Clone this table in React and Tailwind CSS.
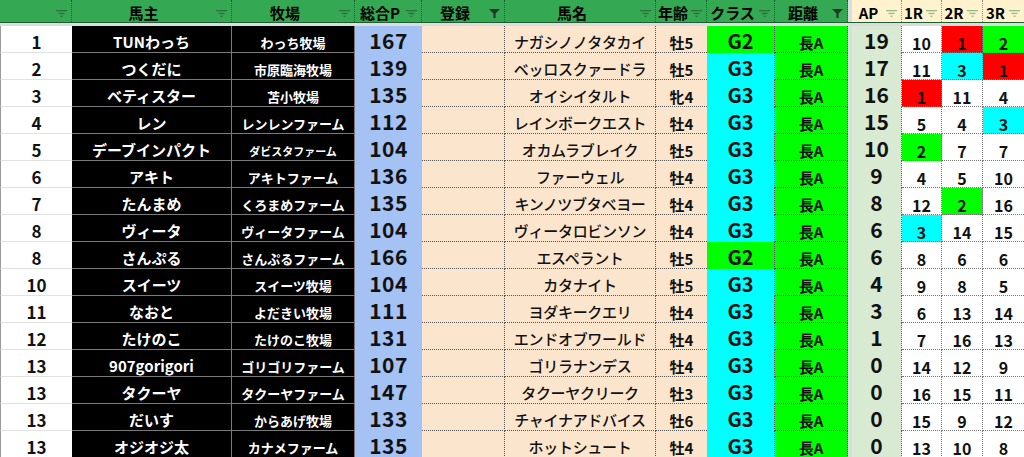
import React from "react";

const FONT = { fontFamily: '"Noto Sans CJK JP", "Noto Sans", sans-serif' };

const rows = [
  [1, "TUNわっち", "わっち牧場", 167, "ナガシノノタタカイ", "牡5", "G2", 19, 10, 1, 2],
  [2, "つくだに", "市原臨海牧場", 139, "ベッロスクァードラ", "牡5", "G3", 17, 11, 3, 1],
  [3, "ベティスター", "苫小牧場", 135, "オイシイタルト", "牝4", "G3", 16, 1, 11, 4],
  [4, "レン", "レンレンファーム", 112, "レインボークエスト", "牡4", "G3", 15, 5, 4, 3],
  [5, "デーブインパクト", "ダビスタファーム", 104, "オカムラブレイク", "牡5", "G3", 10, 2, 7, 7],
  [6, "アキト", "アキトファーム", 136, "ファーウェル", "牡4", "G3", 9, 4, 5, 10],
  [7, "たんまめ", "くろまめファーム", 135, "キンノツブタベヨー", "牡4", "G3", 8, 12, 2, 16],
  [8, "ヴィータ", "ヴィータファーム", 104, "ヴィータロビンソン", "牡4", "G3", 6, 3, 14, 15],
  [8, "さんぷる", "さんぷるファーム", 166, "エスペラント", "牡5", "G2", 6, 8, 6, 6],
  [10, "スイーツ", "スイーツ牧場", 104, "カタナイト", "牡5", "G3", 4, 9, 8, 5],
  [11, "なおと", "よだきい牧場", 111, "ヨダキークエリ", "牡4", "G3", 3, 6, 13, 14],
  [12, "たけのこ", "たけのこ牧場", 131, "エンドオブワールド", "牡4", "G3", 1, 7, 16, 13],
  [13, "907gorigori", "ゴリゴリファーム", 107, "ゴリラナンデス", "牡4", "G3", 0, 14, 12, 9],
  [13, "タクーヤ", "タクーヤファーム", 147, "タクーヤクリーク", "牡3", "G3", 0, 16, 15, 11],
  [13, "だいす", "からあげ牧場", 133, "チャイナアドバイス", "牡6", "G3", 0, 15, 9, 12],
  [13, "オジオジ太", "カナメファーム", 135, "ホットシュート", "牡4", "G3", 0, 13, 10, 8],
];

function FilterIcon({ color = "#2e6b3c" }) {
  return (
    <svg width="11" height="7" viewBox="0 0 11 7" className="shrink-0">
      <rect x="0" y="0" width="11" height="1.3" fill={color} />
      <rect x="2.5" y="2.8" width="6" height="1.3" fill={color} />
      <rect x="4.5" y="5.6" width="2" height="1.3" fill={color} />
    </svg>
  );
}

function ActiveFilter() {
  return (
    <svg width="11" height="9" viewBox="0 0 11 9" className="shrink-0">
      <path d="M0 0 H11 L6.6 4.6 V9 H4.4 V4.6 Z" fill="#1f3b27" />
    </svg>
  );
}

function H({ w, label, active, light, last }) {
  return (
    <div
      className={`${w} h-full flex items-center ${light ? "bg-[#fff2cc]" : "bg-[#34a853]"} ${last ? "" : "border-r border-dotted"} ${light ? "border-[#8a8a8a]" : "border-[#1e5e2f]"}`}
    >
      <div className="flex-1 flex justify-center pt-[3px] text-[15px] font-bold text-black leading-[1.15] whitespace-nowrap">
        {label}
      </div>
      <div className="w-[16px] flex justify-center pt-[5px] pr-[3px]">
        {active ? <ActiveFilter /> : <FilterIcon color={light ? "#8fbf8f" : "#2f6d3e"} />}
      </div>
    </div>
  );
}

function rColor(v) {
  if (v === 1) return "bg-[#ff0000]";
  if (v === 2) return "bg-[#00ff00]";
  if (v === 3) return "bg-[#00ffff]";
  return "bg-white";
}

function Row({ r }) {
  const [rank, owner, farm, total, horse, age, cls, ap, r1, r2, r3] = r;
  const farmSize = farm === "ダビスタファーム" ? "text-[11px]" : "text-[13px]";
  return (
    <div className="flex h-[27px] leading-[1.15]">
      <div className="w-[72px] h-full bg-white border-b border-l border-b-[#e2e2e2] border-l-[#9a9a9a] flex items-center justify-center pt-[6px] text-[17px] font-bold text-[#111]">
        {rank}
      </div>
      <div className="w-[160px] h-full bg-black border-r border-b border-[#7a7a7a] flex items-center justify-center pt-[6px] text-[15px] font-bold text-white whitespace-nowrap">
        {owner}
      </div>
      <div className={`w-[123px] h-full bg-black border-r border-b border-[#7a7a7a] flex items-center justify-center pt-[8px] ${farmSize} font-bold text-white whitespace-nowrap`}>
        {farm}
      </div>
      <div className="w-[67px] h-full bg-[#a4c2f4] flex items-center justify-center pt-[1px] text-[21px] font-bold text-[#111] tracking-[0.5px]">
        {total}
      </div>
      <div className="w-[83px] h-full bg-[#fce5cd] border-r border-b border-dotted border-[#555]"></div>
      <div className="w-[151px] h-full bg-[#fce5cd] border-r border-b border-dotted border-[#555] flex items-center justify-center pt-[6px] text-[15px] font-medium text-[#111] whitespace-nowrap tracking-[-0.3px]">
        {horse}
      </div>
      <div className="w-[51px] h-full bg-[#fce5cd] border-b border-dotted border-[#555] flex items-center justify-center pt-[8px] text-[15px] font-bold text-[#111]">
        {age}
      </div>
      <div className={`w-[68px] h-full ${cls === "G2" ? "bg-[#00ff00]" : "bg-[#00ffff]"} border-r border-dotted border-[#555] flex items-center justify-center pt-[1px] text-[20px] font-bold text-[#111]`}>
        {cls}
      </div>
      <div className="w-[73px] h-full bg-[#00ff00] border-r border-b border-dotted border-[#444] flex items-center justify-center pt-[8px] text-[15px] font-bold text-[#111]">
        長A
      </div>
      <div className="w-[4px] h-full bg-[#dadce0]"></div>
      <div className="w-[50px] h-full bg-[#d9ead3] border-r border-dotted border-[#666] flex items-center justify-center pt-[1px] text-[21px] font-bold text-[#111]">
        {ap}
      </div>
      <div className={`w-[40px] h-full ${rColor(r1)} border-r border-b border-dotted border-[#777] flex items-center justify-center pt-[8px] text-[16px] font-bold text-[#111]`}>
        {r1}
      </div>
      <div className={`w-[41px] h-full ${rColor(r2)} border-r border-b border-dotted border-[#777] flex items-center justify-center pt-[8px] text-[16px] font-bold text-[#111]`}>
        {r2}
      </div>
      <div className={`w-[41px] h-full ${rColor(r3)} border-b border-dotted border-[#777] flex items-center justify-center pt-[8px] text-[16px] font-bold text-[#111]`}>
        {r3}
      </div>
    </div>
  );
}

export default function App() {
  return (
    <div className="w-[1024px] h-[457px] overflow-hidden bg-white" style={FONT}>
      <div className="flex h-[23px] border-b border-[#1e5e2f]">
        <H w="w-[72px]" label="" />
        <H w="w-[160px]" label="馬主" />
        <H w="w-[123px]" label="牧場" />
        <H w="w-[67px]" label="総合P" />
        <H w="w-[83px]" label="登録" active />
        <H w="w-[151px]" label="馬名" />
        <H w="w-[51px]" label="年齢" />
        <H w="w-[68px]" label="クラス" />
        <H w="w-[73px]" label="距離" active />
        <div className="w-[4px] h-full bg-[#dadce0]"></div>
        <H w="w-[50px]" label="AP" light />
        <H w="w-[40px]" label="1R" light />
        <H w="w-[41px]" label="2R" light />
        <H w="w-[41px]" label="3R" light last />
      </div>
      <div className="h-[3px] bg-[#dadce0]"></div>
      {rows.map((r, i) => (
        <Row key={i} r={r} />
      ))}
    </div>
  );
}
